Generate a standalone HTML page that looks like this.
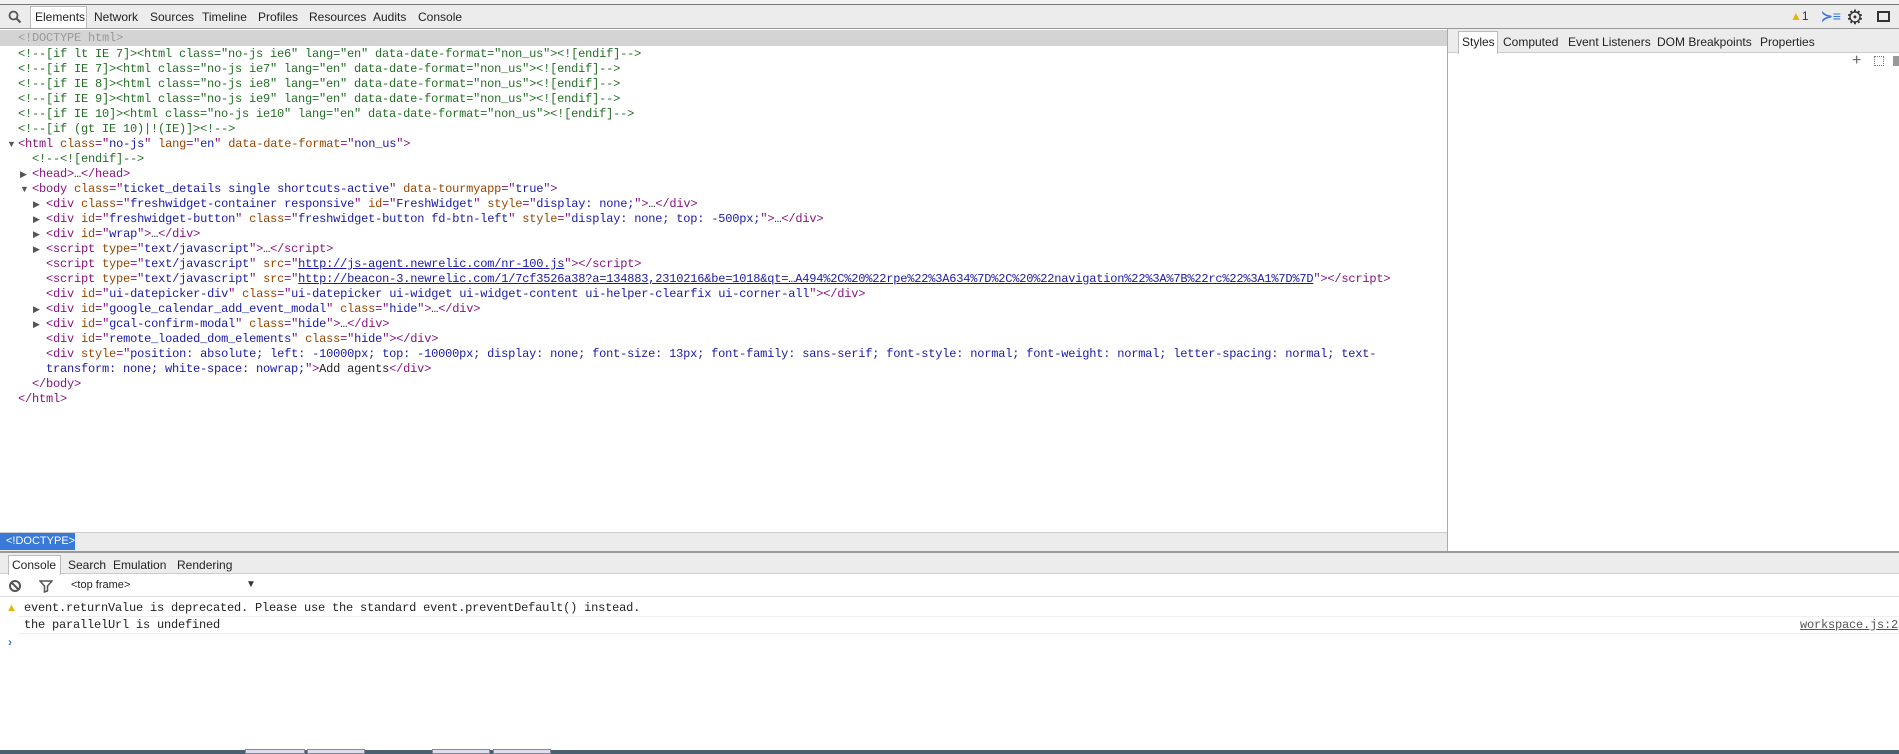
<!DOCTYPE html>
<html><head><style>
*{margin:0;padding:0;box-sizing:border-box}
body{width:1899px;height:754px;overflow:hidden;background:#fff;position:relative;font-family:"Liberation Sans",sans-serif;font-size:12px;color:#222}
.a{position:absolute;white-space:pre}
.code{font-family:"Liberation Mono",monospace;font-size:12px;line-height:15px;letter-spacing:-0.2px}
.t{color:#881280}.n{color:#994500}.v{color:#1a1aa6}.c{color:#236e25}
.u{color:#1a1aa6;text-decoration:underline}
.tri{color:#555;font-size:9px}
</style></head><body>
<div class="a" style="left:0;top:0;width:1899px;height:5px;background:#f1f1f1;border-bottom:1px solid #777"></div>
<div class="a" style="left:0;top:5px;width:1899px;height:24px;background:#ececec;border-bottom:1px solid #999"></div>
<svg class="a" style="left:8px;top:10px" width="14" height="14"><circle cx="5.5" cy="5.5" r="4" fill="none" stroke="#555" stroke-width="1.8"/><line x1="8.5" y1="8.5" x2="12.5" y2="12.5" stroke="#555" stroke-width="2"/></svg>
<div class="a" style="left:30px;top:6px;width:57px;height:22px;background:#fff;border:1px solid #bbb;border-bottom:none"></div>
<div class="a" style="left:35px;top:10px">Elements</div>
<div class="a" style="left:94px;top:10px">Network</div>
<div class="a" style="left:150px;top:10px">Sources</div>
<div class="a" style="left:202px;top:10px">Timeline</div>
<div class="a" style="left:258px;top:10px">Profiles</div>
<div class="a" style="left:309px;top:10px">Resources</div>
<div class="a" style="left:373px;top:10px">Audits</div>
<div class="a" style="left:418px;top:10px">Console</div>
<div class="a" style="left:1790px;top:9px;color:#e8b400;font-size:12px">▲<span style="color:#333">1</span></div>
<div class="a" style="left:1821px;top:8px;color:#3b78e7;font-size:14px;font-weight:bold">≻≡</div>
<div class="a" style="left:1846px;top:5px;color:#333;font-size:20px">⚙</div>
<div class="a" style="left:1877px;top:11px;width:13px;height:11px;border:2px solid #333"></div>

<div class="a" style="left:0;top:30px;width:1447px;height:16px;background:#d4d4d4"></div>
<div class="a code" style="left:18px;top:31px;color:#999">&lt;!DOCTYPE html&gt;</div>

<div class="a code" style="left:18px;top:47px"><span class="c">&lt;!--[if lt IE 7]&gt;&lt;html class="no-js ie6" lang="en" data-date-format="non_us"&gt;&lt;![endif]--&gt;</span>
<span class="c">&lt;!--[if IE 7]&gt;&lt;html class="no-js ie7" lang="en" data-date-format="non_us"&gt;&lt;![endif]--&gt;</span>
<span class="c">&lt;!--[if IE 8]&gt;&lt;html class="no-js ie8" lang="en" data-date-format="non_us"&gt;&lt;![endif]--&gt;</span>
<span class="c">&lt;!--[if IE 9]&gt;&lt;html class="no-js ie9" lang="en" data-date-format="non_us"&gt;&lt;![endif]--&gt;</span>
<span class="c">&lt;!--[if IE 10]&gt;&lt;html class="no-js ie10" lang="en" data-date-format="non_us"&gt;&lt;![endif]--&gt;</span>
<span class="c">&lt;!--[if (gt IE 10)|!(IE)]&gt;&lt;!--&gt;</span>
<span class="t">&lt;html</span> <span class="n">class</span><span class="t">="</span><span class="v">no-js</span><span class="t">"</span> <span class="n">lang</span><span class="t">="</span><span class="v">en</span><span class="t">"</span> <span class="n">data-date-format</span><span class="t">="</span><span class="v">non_us</span><span class="t">"&gt;</span>
  <span class="c">&lt;!--&lt;![endif]--&gt;</span>
  <span class="t">&lt;head&gt;</span>…<span class="t">&lt;/head&gt;</span>
  <span class="t">&lt;body</span> <span class="n">class</span><span class="t">="</span><span class="v">ticket_details single shortcuts-active</span><span class="t">"</span> <span class="n">data-tourmyapp</span><span class="t">="</span><span class="v">true</span><span class="t">"&gt;</span>
    <span class="t">&lt;div</span> <span class="n">class</span><span class="t">="</span><span class="v">freshwidget-container responsive</span><span class="t">"</span> <span class="n">id</span><span class="t">="</span><span class="v">FreshWidget</span><span class="t">"</span> <span class="n">style</span><span class="t">="</span><span class="v">display: none;</span><span class="t">"&gt;</span>…<span class="t">&lt;/div&gt;</span>
    <span class="t">&lt;div</span> <span class="n">id</span><span class="t">="</span><span class="v">freshwidget-button</span><span class="t">"</span> <span class="n">class</span><span class="t">="</span><span class="v">freshwidget-button fd-btn-left</span><span class="t">"</span> <span class="n">style</span><span class="t">="</span><span class="v">display: none; top: -500px;</span><span class="t">"&gt;</span>…<span class="t">&lt;/div&gt;</span>
    <span class="t">&lt;div</span> <span class="n">id</span><span class="t">="</span><span class="v">wrap</span><span class="t">"&gt;</span>…<span class="t">&lt;/div&gt;</span>
    <span class="t">&lt;script</span> <span class="n">type</span><span class="t">="</span><span class="v">text/javascript</span><span class="t">"&gt;</span>…<span class="t">&lt;/script&gt;</span>
    <span class="t">&lt;script</span> <span class="n">type</span><span class="t">="</span><span class="v">text/javascript</span><span class="t">"</span> <span class="n">src</span><span class="t">="</span><span class="u">http://js-agent.newrelic.com/nr-100.js</span><span class="t">"&gt;&lt;/script&gt;</span>
    <span class="t">&lt;script</span> <span class="n">type</span><span class="t">="</span><span class="v">text/javascript</span><span class="t">"</span> <span class="n">src</span><span class="t">="</span><span class="u">http://beacon-3.newrelic.com/1/7cf3526a38?a=134883,2310216&amp;be=1018&amp;qt=…A494%2C%20%22rpe%22%3A634%7D%2C%20%22navigation%22%3A%7B%22rc%22%3A1%7D%7D</span><span class="t">"&gt;&lt;/script&gt;</span>
    <span class="t">&lt;div</span> <span class="n">id</span><span class="t">="</span><span class="v">ui-datepicker-div</span><span class="t">"</span> <span class="n">class</span><span class="t">="</span><span class="v">ui-datepicker ui-widget ui-widget-content ui-helper-clearfix ui-corner-all</span><span class="t">"&gt;&lt;/div&gt;</span>
    <span class="t">&lt;div</span> <span class="n">id</span><span class="t">="</span><span class="v">google_calendar_add_event_modal</span><span class="t">"</span> <span class="n">class</span><span class="t">="</span><span class="v">hide</span><span class="t">"&gt;</span>…<span class="t">&lt;/div&gt;</span>
    <span class="t">&lt;div</span> <span class="n">id</span><span class="t">="</span><span class="v">gcal-confirm-modal</span><span class="t">"</span> <span class="n">class</span><span class="t">="</span><span class="v">hide</span><span class="t">"&gt;</span>…<span class="t">&lt;/div&gt;</span>
    <span class="t">&lt;div</span> <span class="n">id</span><span class="t">="</span><span class="v">remote_loaded_dom_elements</span><span class="t">"</span> <span class="n">class</span><span class="t">="</span><span class="v">hide</span><span class="t">"&gt;&lt;/div&gt;</span>
    <span class="t">&lt;div</span> <span class="n">style</span><span class="t">="</span><span class="v">position: absolute; left: -10000px; top: -10000px; display: none; font-size: 13px; font-family: sans-serif; font-style: normal; font-weight: normal; letter-spacing: normal; text-</span>
<span class="v">    transform: none; white-space: nowrap;</span><span class="t">"&gt;</span>Add agents<span class="t">&lt;/div&gt;</span>
  <span class="t">&lt;/body&gt;</span>
<span class="t">&lt;/html&gt;</span></div>
<div class="a tri" style="left:7px;top:139px">▼</div>
<div class="a tri" style="left:20px;top:169px">▶</div>
<div class="a tri" style="left:20px;top:184px">▼</div>
<div class="a tri" style="left:33px;top:199px">▶</div>
<div class="a tri" style="left:33px;top:214px">▶</div>
<div class="a tri" style="left:33px;top:229px">▶</div>
<div class="a tri" style="left:33px;top:244px">▶</div>
<div class="a tri" style="left:33px;top:304px">▶</div>
<div class="a tri" style="left:33px;top:319px">▶</div>

<div class="a" style="left:1447px;top:29px;width:1px;height:523px;background:#aaa"></div>
<div class="a" style="left:1448px;top:29px;width:451px;height:24px;background:#ececec;border-bottom:1px solid #ccc"></div>
<div class="a" style="left:1458px;top:31px;width:40px;height:23px;background:#fff;border:1px solid #bbb;border-bottom:none"></div>
<div class="a" style="left:1462px;top:35px">Styles</div>
<div class="a" style="left:1503px;top:35px">Computed</div>
<div class="a" style="left:1568px;top:35px">Event Listeners</div>
<div class="a" style="left:1657px;top:35px">DOM Breakpoints</div>
<div class="a" style="left:1760px;top:35px">Properties</div>
<div class="a" style="left:1852px;top:52px;color:#666;font-size:16px">+</div>
<div class="a" style="left:1874px;top:56px;width:10px;height:10px;border:1px dotted #777"></div>
<div class="a" style="left:1893px;top:56px;width:6px;height:10px;background:#999"></div>

<div class="a" style="left:0;top:532px;width:1447px;height:20px;background:#ececec;border-top:1px solid #ccc"></div>
<div class="a" style="left:0;top:533px;width:75px;height:17px;background:#3879d9;color:#fff;font-size:11px;padding:2px 0 0 6px">&lt;!DOCTYPE&gt;</div>
<div class="a" style="left:0;top:551px;width:1899px;height:2px;background:#999"></div>
<div class="a" style="left:0;top:553px;width:1899px;height:21px;background:#ececec;border-bottom:1px solid #ccc"></div>
<div class="a" style="left:8px;top:555px;width:53px;height:20px;background:#fff;border:1px solid #bbb;border-bottom:none"></div>
<div class="a" style="left:12px;top:558px">Console</div>
<div class="a" style="left:68px;top:558px">Search</div>
<div class="a" style="left:113px;top:558px">Emulation</div>
<div class="a" style="left:177px;top:558px">Rendering</div>
<svg class="a" style="left:8px;top:579px" width="14" height="14"><circle cx="7" cy="7" r="5" fill="none" stroke="#555" stroke-width="2"/><line x1="3.5" y1="3.5" x2="10.5" y2="10.5" stroke="#555" stroke-width="2"/></svg>
<svg class="a" style="left:39px;top:579px" width="14" height="14"><path d="M1 2H13L8.5 7V12L5.5 13V7Z" fill="none" stroke="#555" stroke-width="1.5"/></svg>
<div class="a" style="left:71px;top:579px;font-size:11px">&lt;top frame&gt;</div>
<div class="a" style="left:246px;top:579px;font-size:10px;color:#333">▼</div>
<div class="a" style="left:0;top:596px;width:1899px;height:1px;background:#ddd"></div>
<div class="a" style="left:6px;top:602px;color:#e8b400;font-size:11px">▲</div>
<div class="a code" style="left:24px;top:601px">event.returnValue is deprecated. Please use the standard event.preventDefault() instead.</div>
<div class="a" style="left:18px;top:616px;width:1881px;height:1px;background:#eee"></div>
<div class="a code" style="left:24px;top:618px">the parallelUrl is undefined</div>
<div class="a code" style="left:1800px;top:618px;color:#555;text-decoration:underline">workspace.js:2</div>
<div class="a" style="left:18px;top:633px;width:1881px;height:1px;background:#eee"></div>
<div class="a" style="left:8px;top:635px;color:#3b78e7;font-size:12px;font-weight:bold">›</div>

<div class="a" style="left:0;top:750px;width:1899px;height:4px;background:#4a6070"></div>
<div class="a" style="left:245px;top:749px;width:60px;height:5px;background:#dde;border:1px solid #889"></div>
<div class="a" style="left:307px;top:749px;width:58px;height:5px;background:#dde;border:1px solid #889"></div>
<div class="a" style="left:432px;top:749px;width:58px;height:5px;background:#dde;border:1px solid #889"></div>
<div class="a" style="left:493px;top:749px;width:58px;height:5px;background:#dde;border:1px solid #889"></div>
</body></html>
